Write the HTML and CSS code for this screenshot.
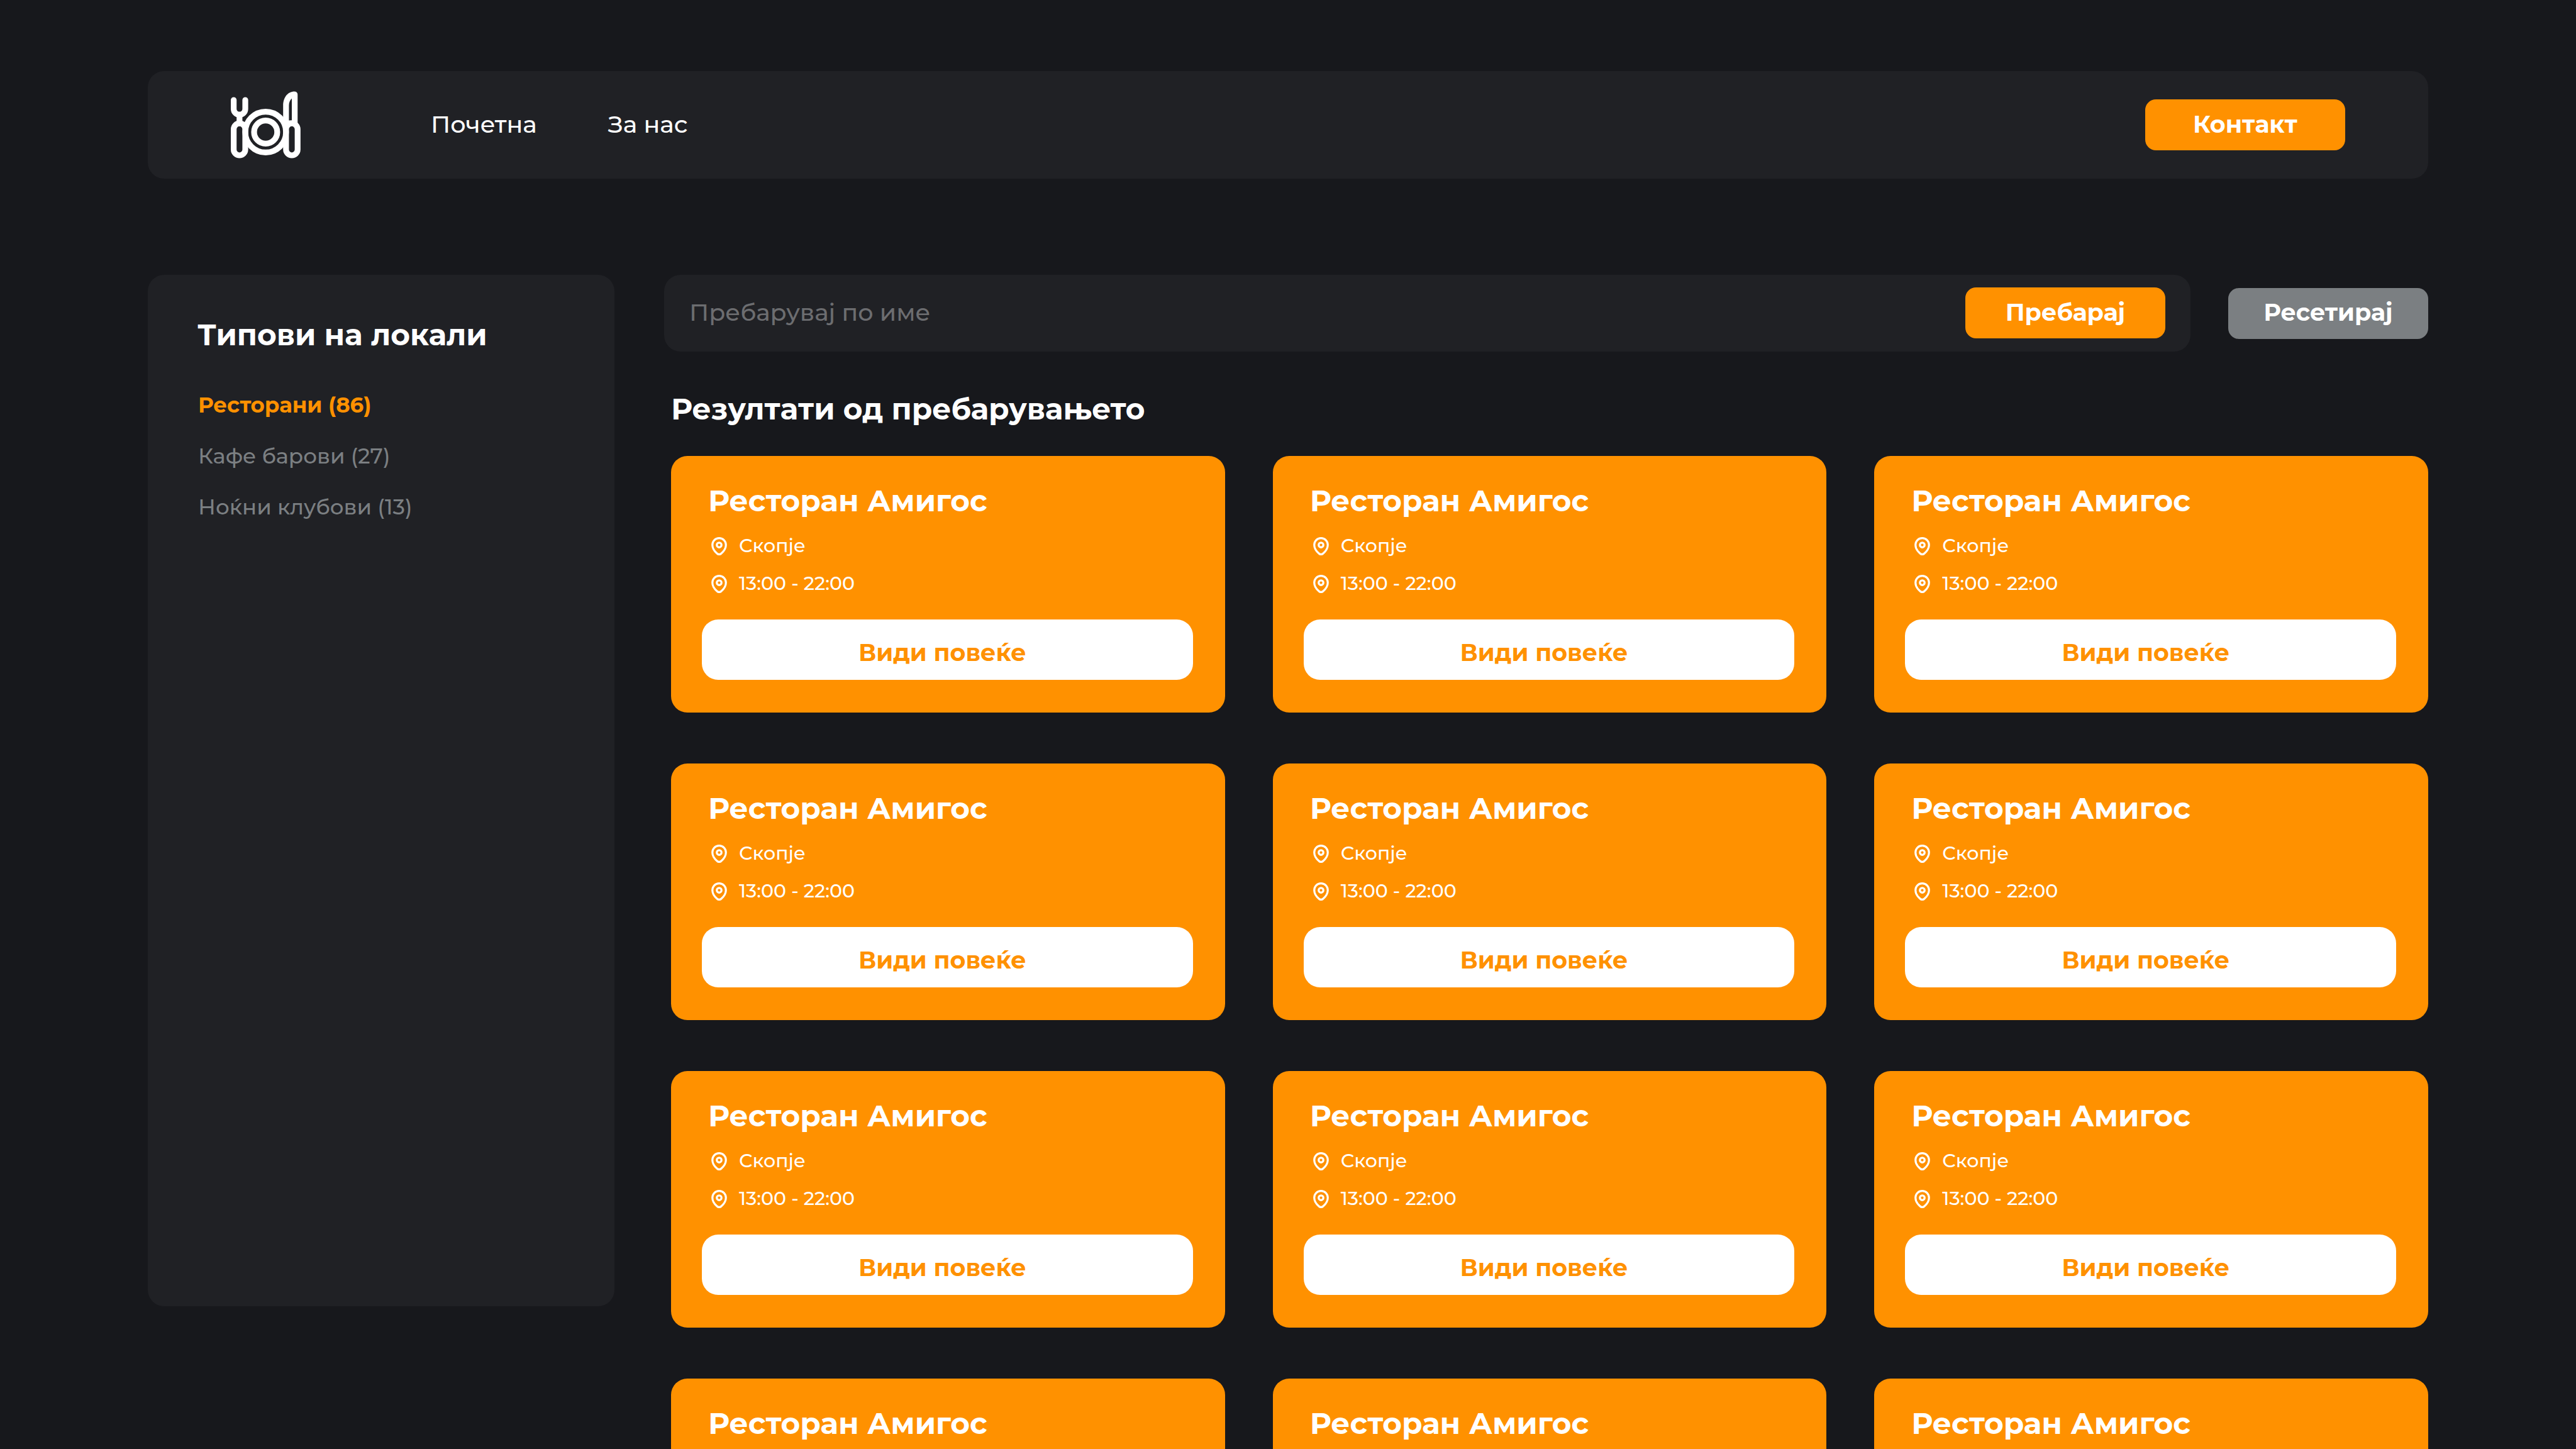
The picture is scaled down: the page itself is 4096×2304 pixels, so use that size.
FILE: index.html
```
<!DOCTYPE html>
<html lang="mk">
<head>
  <meta charset="utf-8">
  <meta name="viewport" content="width=device-width, initial-scale=1">
  <title>Ресторани</title>
  <link rel="stylesheet" href="styles.css">
</head>
<body>
  <svg class="sprite" aria-hidden="true">
    <symbol id="pin" viewBox="0 0 138 162">
      <path d="M69 9C34 9 9 36 9 70C9 100 32 130 50 145C62 156 76 156 88 145C106 130 129 100 129 70C129 36 104 9 69 9Z" fill="none" stroke="currentColor" stroke-width="18"/>
      <circle cx="69" cy="70" r="21" fill="none" stroke="currentColor" stroke-width="18"/>
    </symbol>
  </svg>

  <div class="page">
    <header class="header">
      <a class="logo" href="#" aria-label="Почетна">
        <svg class="logo-icon" viewBox="144 96 627 600" aria-hidden="true">
          <g fill="none" stroke="currentColor" stroke-width="52" stroke-linecap="round">
            <path d="M170 173V253A52 52 0 0 0 274 253V173"/>
            <path d="M222 305V383"/>
            <rect x="170" y="383" width="104" height="287" rx="52"/>
            <circle cx="457" cy="461" r="183"/>
            <circle cx="457" cy="461" r="104"/>
            <rect x="640" y="383" width="104" height="287" rx="52"/>
          </g>
          <path fill="currentColor" fill-rule="evenodd" d="M614 400V222C614 150 655 96 716 96A28 28 0 0 1 744 124V400ZM666 357H692V159C675 175 666 198 666 222Z"/>
        </svg>
      </a>
      <nav class="nav">
        <a href="#">Почетна</a>
        <a href="#">За нас</a>
      </nav>
      <button class="button" type="button">Контакт</button>
    </header>

    <div class="layout">
      <aside class="sidebar">
        <h2 class="heading">Типови на локали</h2>
        <ul class="types">
          <li><a class="active" href="#">Ресторани (86)</a></li>
          <li><a href="#">Кафе барови (27)</a></li>
          <li><a href="#">Ноќни клубови (13)</a></li>
        </ul>
      </aside>

      <main class="main">
        <form class="search">
          <div class="search-box">
            <input class="search-input" type="text" placeholder="Пребарувај по име" aria-label="Пребарувај по име">
            <button class="button" type="submit">Пребарај</button>
          </div>
          <button class="button button-muted" type="reset">Ресетирај</button>
        </form>

        <section class="results">
          <h2 class="heading">Резултати од пребарувањето</h2>
          <div class="cards">
            <article class="card">
              <h3 class="card-title">Ресторан Амигос</h3>
              <ul class="meta">
                <li><svg class="pin"><use href="#pin"/></svg>Скопје</li>
                <li><svg class="pin"><use href="#pin"/></svg>13:00 - 22:00</li>
              </ul>
              <button class="more" type="button">Види повеќе</button>
            </article>
            <article class="card">
              <h3 class="card-title">Ресторан Амигос</h3>
              <ul class="meta">
                <li><svg class="pin"><use href="#pin"/></svg>Скопје</li>
                <li><svg class="pin"><use href="#pin"/></svg>13:00 - 22:00</li>
              </ul>
              <button class="more" type="button">Види повеќе</button>
            </article>
            <article class="card">
              <h3 class="card-title">Ресторан Амигос</h3>
              <ul class="meta">
                <li><svg class="pin"><use href="#pin"/></svg>Скопје</li>
                <li><svg class="pin"><use href="#pin"/></svg>13:00 - 22:00</li>
              </ul>
              <button class="more" type="button">Види повеќе</button>
            </article>
            <article class="card">
              <h3 class="card-title">Ресторан Амигос</h3>
              <ul class="meta">
                <li><svg class="pin"><use href="#pin"/></svg>Скопје</li>
                <li><svg class="pin"><use href="#pin"/></svg>13:00 - 22:00</li>
              </ul>
              <button class="more" type="button">Види повеќе</button>
            </article>
            <article class="card">
              <h3 class="card-title">Ресторан Амигос</h3>
              <ul class="meta">
                <li><svg class="pin"><use href="#pin"/></svg>Скопје</li>
                <li><svg class="pin"><use href="#pin"/></svg>13:00 - 22:00</li>
              </ul>
              <button class="more" type="button">Види повеќе</button>
            </article>
            <article class="card">
              <h3 class="card-title">Ресторан Амигос</h3>
              <ul class="meta">
                <li><svg class="pin"><use href="#pin"/></svg>Скопје</li>
                <li><svg class="pin"><use href="#pin"/></svg>13:00 - 22:00</li>
              </ul>
              <button class="more" type="button">Види повеќе</button>
            </article>
            <article class="card">
              <h3 class="card-title">Ресторан Амигос</h3>
              <ul class="meta">
                <li><svg class="pin"><use href="#pin"/></svg>Скопје</li>
                <li><svg class="pin"><use href="#pin"/></svg>13:00 - 22:00</li>
              </ul>
              <button class="more" type="button">Види повеќе</button>
            </article>
            <article class="card">
              <h3 class="card-title">Ресторан Амигос</h3>
              <ul class="meta">
                <li><svg class="pin"><use href="#pin"/></svg>Скопје</li>
                <li><svg class="pin"><use href="#pin"/></svg>13:00 - 22:00</li>
              </ul>
              <button class="more" type="button">Види повеќе</button>
            </article>
            <article class="card">
              <h3 class="card-title">Ресторан Амигос</h3>
              <ul class="meta">
                <li><svg class="pin"><use href="#pin"/></svg>Скопје</li>
                <li><svg class="pin"><use href="#pin"/></svg>13:00 - 22:00</li>
              </ul>
              <button class="more" type="button">Види повеќе</button>
            </article>
            <article class="card">
              <h3 class="card-title">Ресторан Амигос</h3>
              <ul class="meta">
                <li><svg class="pin"><use href="#pin"/></svg>Скопје</li>
                <li><svg class="pin"><use href="#pin"/></svg>13:00 - 22:00</li>
              </ul>
              <button class="more" type="button">Види повеќе</button>
            </article>
            <article class="card">
              <h3 class="card-title">Ресторан Амигос</h3>
              <ul class="meta">
                <li><svg class="pin"><use href="#pin"/></svg>Скопје</li>
                <li><svg class="pin"><use href="#pin"/></svg>13:00 - 22:00</li>
              </ul>
              <button class="more" type="button">Види повеќе</button>
            </article>
            <article class="card">
              <h3 class="card-title">Ресторан Амигос</h3>
              <ul class="meta">
                <li><svg class="pin"><use href="#pin"/></svg>Скопје</li>
                <li><svg class="pin"><use href="#pin"/></svg>13:00 - 22:00</li>
              </ul>
              <button class="more" type="button">Види повеќе</button>
            </article>
          </div>
        </section>
      </main>
    </div>
  </div>
</body>
</html>
```
FILE: styles.css
```
:root {
  --bg: #17181c;
  --panel: #202125;
  --accent: #ff9100;
  --muted: #7b7f82;
}

* {
  box-sizing: border-box;
}

body {
  margin: 0;
  background: var(--bg);
  color: #fff;
  font-family: Montserrat, "Open Sans", "Noto Sans", sans-serif;
}

h2,
h3,
ul {
  margin: 0;
  padding: 0;
}

ul {
  list-style: none;
}

a {
  color: inherit;
  text-decoration: none;
}

button,
input {
  border: 0;
  font-family: inherit;
}

.sprite {
  display: none;
}

.page {
  padding: 113px 235px;
}

.header {
  display: flex;
  align-items: center;
  padding: 45px 132px;
  margin-bottom: 153px;
  border-radius: 26px;
  background: var(--panel);
}

/* The logo is taller than the header's text row, so it may reach into the padding. */
.logo {
  display: flex;
  margin: -14px 207px -14px 0;
}

.logo-icon {
  width: 111px;
  height: 107px;
}

.nav {
  display: flex;
  gap: 113px;
  margin-right: auto;
  padding-bottom: 2px;
  font-size: 38px;
  font-weight: 500;
  line-height: 60px;
}

.button {
  flex: none;
  width: 318px;
  height: 81px;
  padding: 0 0 2px;
  border-radius: 17px;
  background: var(--accent);
  color: #fff;
  font-size: 38px;
  font-weight: 700;
  line-height: 60px;
}

.button-muted {
  background: var(--muted);
}

.heading,
.card-title {
  font-size: 47px;
  font-weight: 700;
  line-height: 60px;
}

.layout {
  display: flex;
  align-items: flex-start;
  gap: 79px;
}

.sidebar {
  flex: none;
  width: 742px;
  min-height: 1640px;
  padding: 66px 79px;
  border-radius: 26px;
  background: var(--panel);
}

.types {
  display: flex;
  flex-direction: column;
  gap: 32px;
  margin-top: 57px;
  padding-left: 1px;
  color: var(--muted);
  font-size: 34px;
  font-weight: 500;
  line-height: 49px;
}

.types .active {
  color: var(--accent);
  font-weight: 700;
}

.main {
  flex: 1;
  min-width: 0;
}

.search {
  display: flex;
  align-items: center;
  gap: 60px;
}

.search-box {
  display: flex;
  flex: 1;
  align-items: center;
  gap: 40px;
  padding: 20px 40px 21px;
  border-radius: 26px;
  background: var(--panel);
}

.search-input {
  flex: 1;
  min-width: 0;
  padding: 0 0 2px;
  outline: 0;
  background: none;
  color: #fff;
  font-size: 38px;
  font-weight: 500;
  line-height: 60px;
}

.search-input::placeholder {
  color: #6c6d70;
  opacity: 1;
}

.results {
  padding: 62px 0 0 11px;
}

.cards {
  display: grid;
  grid-template-columns: repeat(auto-fill, minmax(760px, 1fr));
  gap: 81px 76px;
  margin-top: 44px;
}

.card {
  padding: 42px 51px 52px 49px;
  border-radius: 26px;
  background: var(--accent);
}

.card-title {
  padding-left: 10px;
}

.meta {
  display: flex;
  flex-direction: column;
  gap: 16px;
  margin: 19px 0 35px;
  padding-left: 15px;
  font-size: 30px;
  font-weight: 500;
  line-height: 44px;
}

.meta li {
  display: flex;
  align-items: center;
  gap: 19px;
}

.pin {
  width: 25px;
  height: 29px;
}

.more {
  display: block;
  width: 100%;
  height: 96px;
  padding: 10px 16px 0 0;
  border-radius: 26px;
  background: #fff;
  color: var(--accent);
  font-size: 38px;
  font-weight: 700;
  line-height: 60px;
}
```
